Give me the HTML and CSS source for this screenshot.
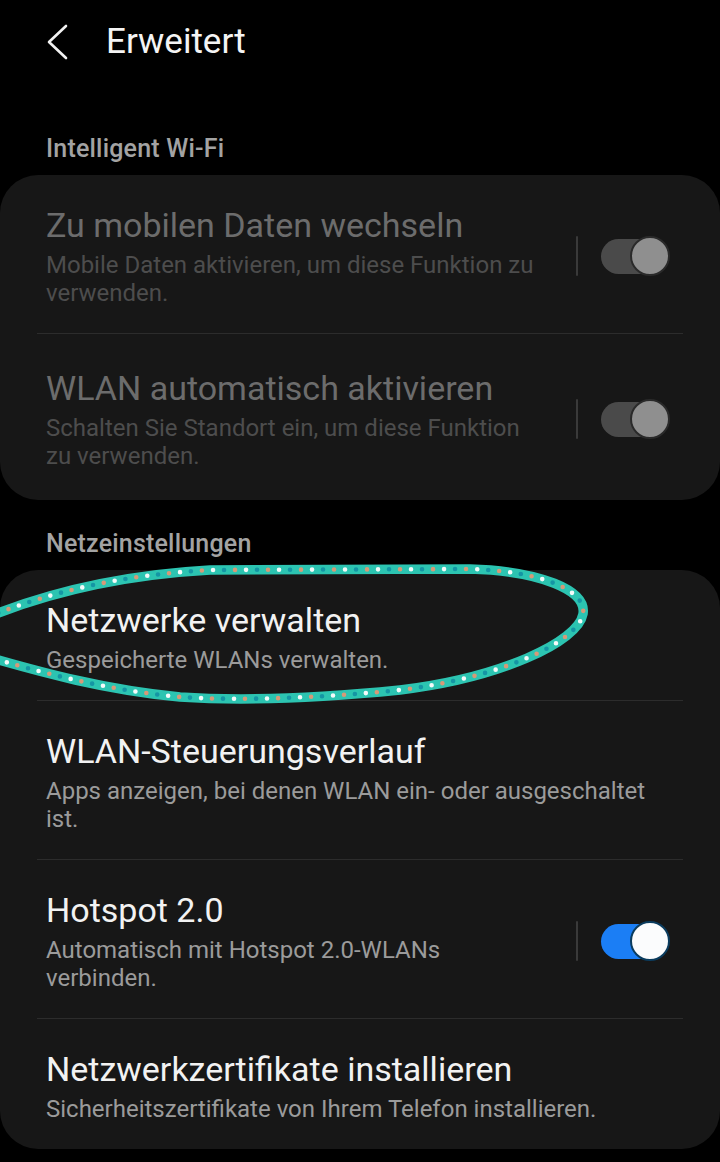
FILE: index.html
```html
<!DOCTYPE html>
<html lang="de">
<head>
<meta charset="utf-8">
<title>Erweitert</title>
<link rel="stylesheet" href="styles.css">
</head>
<body>
<div class="page">
  <header class="appbar">
    <svg class="back" width="24" height="36" viewBox="0 0 24 36"><path d="M20 2 L3 18 L20 34" fill="none" stroke="#f2f2f2" stroke-width="2.6" stroke-linecap="round" stroke-linejoin="round"/></svg>
    <h1 class="title">Erweitert</h1>
  </header>

  <div class="section-label">Intelligent Wi-Fi</div>
  <section class="card">
    <div class="row disabled">
      <div class="text">
        <div class="row-title">Zu mobilen Daten wechseln</div>
        <div class="row-sub">Mobile Daten aktivieren, um diese Funktion zu verwenden.</div>
      </div>
      <div class="ctrl">
        <span class="vsep"></span>
        <span class="switch off"><span class="knob"></span></span>
      </div>
    </div>
    <div class="row disabled loose">
      <div class="text">
        <div class="row-title">WLAN automatisch aktivieren</div>
        <div class="row-sub">Schalten Sie Standort ein, um diese Funktion zu verwenden.</div>
      </div>
      <div class="ctrl">
        <span class="vsep"></span>
        <span class="switch off"><span class="knob"></span></span>
      </div>
    </div>
  </section>

  <div class="section-label second">Netzeinstellungen</div>
  <section class="card">
    <div class="row">
      <div class="text wide">
        <div class="row-title">Netzwerke verwalten</div>
        <div class="row-sub">Gespeicherte WLANs verwalten.</div>
      </div>
    </div>
    <div class="row">
      <div class="text wide">
        <div class="row-title">WLAN-Steuerungsverlauf</div>
        <div class="row-sub">Apps anzeigen, bei denen WLAN ein- oder ausgeschaltet ist.</div>
      </div>
    </div>
    <div class="row">
      <div class="text">
        <div class="row-title">Hotspot 2.0</div>
        <div class="row-sub">Automatisch mit Hotspot 2.0-WLANs verbinden.</div>
      </div>
      <div class="ctrl">
        <span class="vsep"></span>
        <span class="switch on"><span class="knob"></span></span>
      </div>
    </div>
    <div class="row last">
      <div class="text wide">
        <div class="row-title">Netzwerkzertifikate installieren</div>
        <div class="row-sub">Sicherheitszertifikate von Ihrem Telefon installieren.</div>
      </div>
    </div>
  </section>

  <svg class="scribble" viewBox="0 0 720 1162" width="720" height="1162">
    <path class="ring" d="M-12 617 C 50 592, 120 575, 210 570 L 470 569 C 540 571, 587 590, 583 614 C 578 642, 500 678, 400 690 C 320 698, 240 701, 180 697 C 105 690, 40 672, -12 657"/>
    <path class="dots dot-w" d="M-12 617 C 50 592, 120 575, 210 570 L 470 569 C 540 571, 587 590, 583 614 C 578 642, 500 678, 400 690 C 320 698, 240 701, 180 697 C 105 690, 40 672, -12 657"/>
    <path class="dots dot-o" d="M-12 617 C 50 592, 120 575, 210 570 L 470 569 C 540 571, 587 590, 583 614 C 578 642, 500 678, 400 690 C 320 698, 240 701, 180 697 C 105 690, 40 672, -12 657"/>
    <path class="dots dot-t" d="M-12 617 C 50 592, 120 575, 210 570 L 470 569 C 540 571, 587 590, 583 614 C 578 642, 500 678, 400 690 C 320 698, 240 701, 180 697 C 105 690, 40 672, -12 657"/>
  </svg>
</div>
</body>
</html>
```
FILE: styles.css
```css
html, body {
  margin: 0;
  padding: 0;
  background: #000;
}
body {
  font-family: Roboto, "Noto Sans", "Liberation Sans", sans-serif;
  color: #f2f2f2;
  width: 720px;
  height: 1162px;
  overflow: hidden;
}
.page {
  position: relative;
  width: 720px;
  height: 1162px;
}
.appbar {
  height: 82px;
  display: flex;
  align-items: center;
  padding-left: 46px;
  box-sizing: border-box;
}
.back {
  display: block;
  margin-top: 1px;
}
.title {
  margin: 0 0 0 36px;
  font-size: 35px;
  font-weight: 400;
  color: #f4f4f4;
}
.section-label {
  margin: 53px 0 12px 46px;
  font-size: 25px;
  line-height: 28px;
  font-weight: 500;
  letter-spacing: 0.2px;
  color: #a3a3a3;
}
.section-label.second {
  margin-top: 30px;
}
.card {
  background: #171717;
  border-radius: 38px;
  padding: 0 37px;
}
.row {
  display: flex;
  align-items: center;
  padding: 30px 14px 26px 9px;
  border-top: 1px solid #2c2c2c;
}
.row:first-child {
  border-top: none;
}
.row.loose {
  padding-top: 34px;
  padding-bottom: 30px;
}
.text {
  width: 490px;
  flex: none;
}
.text.wide {
  width: 610px;
}
.row-title {
  font-size: 34px;
  line-height: 40px;
  color: #f2f2f2;
}
.row-sub {
  margin-top: 6px;
  font-size: 24px;
  line-height: 28px;
  color: #9b9b9b;
}
.disabled .row-title {
  color: #6c6c6c;
}
.disabled .row-sub {
  color: #4d4d4d;
}
.ctrl {
  margin-left: auto;
  display: flex;
  align-items: center;
}
.vsep {
  width: 2px;
  height: 40px;
  background: #3a3a3a;
  border-radius: 1px;
  margin-right: 23px;
}
.switch {
  width: 68px;
  height: 35px;
  border-radius: 18px;
  display: flex;
  align-items: center;
  justify-content: flex-end;
}
.knob {
  width: 36px;
  height: 36px;
  border-radius: 50%;
  flex: none;
  margin-right: -1px;
}
.switch.off {
  background: #4a4a4a;
}
.switch.off .knob {
  background: #8f8f8f;
  border: 2px solid #2a2a2a;
}
.switch.on {
  background: #1b7ef5;
}
.switch.on .knob {
  background: #fbfcfd;
  border: 2px solid #0b3c5e;
}
.scribble {
  position: absolute;
  left: 0;
  top: 0;
  pointer-events: none;
}
.ring {
  fill: none;
  stroke: #2cc4b1;
  stroke-width: 9.5;
  stroke-linecap: round;
  stroke-linejoin: round;
}
.dots {
  fill: none;
  stroke-width: 4.6;
  stroke-linecap: round;
  stroke-dasharray: 0 33;
}
.dot-w { stroke: #f4fbfa; stroke-dashoffset: 0; }
.dot-o { stroke: #d69a78; stroke-dashoffset: 11; }
.dot-t { stroke: #1595a4; stroke-dashoffset: 22; }
```
